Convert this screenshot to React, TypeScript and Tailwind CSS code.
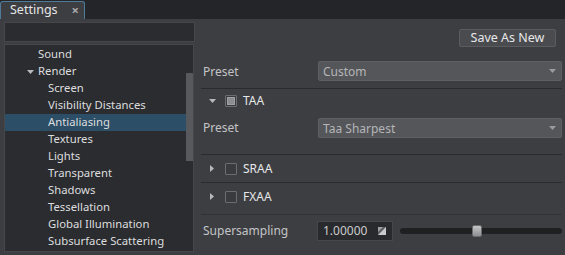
import React from "react";

const treeItems: { label: string; level: number; expanded?: boolean; selected?: boolean }[] = [
  { label: "Sound", level: 0 },
  { label: "Render", level: 0, expanded: true },
  { label: "Screen", level: 1 },
  { label: "Visibility Distances", level: 1 },
  { label: "Antialiasing", level: 1, selected: true },
  { label: "Textures", level: 1 },
  { label: "Lights", level: 1 },
  { label: "Transparent", level: 1 },
  { label: "Shadows", level: 1 },
  { label: "Tessellation", level: 1 },
  { label: "Global Illumination", level: 1 },
  { label: "Subsurface Scattering", level: 1 },
];

function DownTri({ className = "" }: { className?: string }) {
  return (
    <svg width="7" height="4" viewBox="0 0 7 4" className={className}>
      <path d="M0 0 H7 L3.5 4 Z" fill="#b8b9bb" />
    </svg>
  );
}

function RightTri() {
  return (
    <svg width="4" height="7" viewBox="0 0 4 7">
      <path d="M0 0 V7 L4 3.5 Z" fill="#b8b9bb" />
    </svg>
  );
}

function Dropdown({ value }: { value: string }) {
  return (
    <div className="flex-1 h-[20px] bg-[#55565a] border border-[#5e5f63] rounded-[2px] flex items-center pl-[4px] pr-[5px]">
      <span className="flex-1 text-[#b4b5b7] pt-[1px]">{value}</span>
      <svg width="7" height="4" viewBox="0 0 7 4">
        <path d="M0 0 H7 L3.5 4 Z" fill="#9a9b9e" />
      </svg>
    </div>
  );
}

function Checkbox({ checked }: { checked?: boolean }) {
  return (
    <div className="w-[12px] h-[12px] border border-[#6c6d70] rounded-[1px] flex items-center justify-center bg-[#3a3b3f]">
      {checked && <div className="w-[8px] h-[8px] bg-[#8c8d90] border border-[#a0a1a4]" />}
    </div>
  );
}

export default function App() {
  return (
    <div
      className="w-[565px] h-[255px] bg-[#242528] flex flex-col overflow-hidden text-[12px] text-[#dedfe0]"
      style={{ fontFamily: '"Noto Sans", "Liberation Sans", sans-serif' }}
    >
      {/* tab bar */}
      <div className="h-[19px] flex items-end">
        <div className="w-[85px] h-[18px] bg-[#3d3e42] border border-b-0 border-[#4f7b99] rounded-t-[3px] flex items-center pl-[9px] pr-[5px]">
          <span className="flex-1 text-[12.5px] text-[#e4e5e6] leading-none">Settings</span>
          <span className="text-[13px] font-bold text-[#a9aaac] leading-none">×</span>
        </div>
      </div>

      {/* body */}
      <div className="flex-1 bg-[#3d3e42] flex">
        {/* left column */}
        <div className="w-[195px] pl-[4px] pt-[3px] flex flex-col">
          <div className="h-[20px] w-[191px] bg-[#2b2c2f] border border-[#46474b]" />
          <div className="mt-[2px] h-[208px] w-[190px] bg-[#2b2c2f] border border-[#46474b] flex">
            <div className="flex-1 pt-[1px] text-[11.3px] text-[#dcdddf]">
              {treeItems.map((it) => (
                <div
                  key={it.label}
                  className={`h-[17px] flex items-center ${it.selected ? "bg-[#2c4e67]" : ""}`}
                >
                  {it.level === 0 ? (
                    <div className="w-[33px] flex justify-end pr-[4px]">
                      {it.expanded && <DownTri />}
                    </div>
                  ) : (
                    <div className="w-[43px]" />
                  )}
                  <span>{it.label}</span>
                </div>
              ))}
            </div>
            <div className="w-[7px] pt-[28px]">
              <div className="w-[7px] h-[88px] bg-[#58595d] rounded-t-[1px]" />
            </div>
          </div>
        </div>

        {/* right panel */}
        <div className="flex-1 pl-[6px] pr-[3px] flex flex-col">
          <div className="mt-[10px] flex justify-end pr-[6px]">
            <div className="w-[97px] h-[18px] bg-[#4a4b4f] border border-[#5b5c60] rounded-[2px] flex items-center justify-center text-[12.5px] text-[#e6e7e8]">
              Save As New
            </div>
          </div>

          <div className="mt-[14px] h-[20px] flex items-center">
            <span className="w-[117px] pl-[2px] text-[#c3c4c6] pt-[1px]">Preset</span>
            <Dropdown value="Custom" />
          </div>

          <div className="mt-[7px] h-px bg-[#2a2b2e]" />

          <div className="h-[24px] flex items-center">
            <div className="w-[24px] flex justify-end pr-[9px]">
              <DownTri />
            </div>
            <Checkbox checked />
            <span className="ml-[6px] text-[#e6e7e8]">TAA</span>
          </div>

          <div className="mt-[5px] h-[20px] flex items-center">
            <span className="w-[117px] pl-[2px] text-[#c3c4c6]">Preset</span>
            <Dropdown value="Taa Sharpest" />
          </div>

          <div className="mt-[16px] h-px bg-[#2a2b2e]" />

          <div className="h-[27px] flex items-center">
            <div className="w-[24px] flex justify-end pr-[11px]">
              <RightTri />
            </div>
            <Checkbox />
            <span className="ml-[6px] text-[#e6e7e8]">SRAA</span>
          </div>

          <div className="h-px bg-[#2a2b2e]" />

          <div className="h-[27px] flex items-center">
            <div className="w-[24px] flex justify-end pr-[11px]">
              <RightTri />
            </div>
            <Checkbox />
            <span className="ml-[6px] text-[#e6e7e8]">FXAA</span>
          </div>

          <div className="mt-[4px] h-px bg-[#323337]" />

          <div className="mt-[6px] h-[20px] flex items-center">
            <span className="w-[116px] pl-[2px] text-[#c3c4c6]">Supersampling</span>
            <div className="w-[76px] h-[20px] bg-[#292a2d] border border-[#47484c] flex items-center pl-[5px] pr-[6px]">
              <span className="flex-1 text-[#c9cacc]">1.00000</span>
              <svg width="8" height="8" viewBox="0 0 8 8">
                <rect x="0" y="0" width="8" height="8" fill="#5a5b5e" />
                <path d="M8 0 V8 H0 Z" fill="#c8c9cb" />
                <path d="M0 0 H5 L0 5 Z" fill="#9d9ea1" />
              </svg>
            </div>
            <div className="flex-1 ml-[7px] relative h-[12px] flex items-center">
              <div className="w-full h-[6px] bg-[#1f2022] rounded-[3px]" />
              <div className="absolute left-[72px] top-0 w-[10px] h-[12px] rounded-[2px] bg-gradient-to-b from-[#c4c5c7] to-[#8e8f92] border border-[#6a6b6e]" />
            </div>
          </div>
        </div>
      </div>
    </div>
  );
}
